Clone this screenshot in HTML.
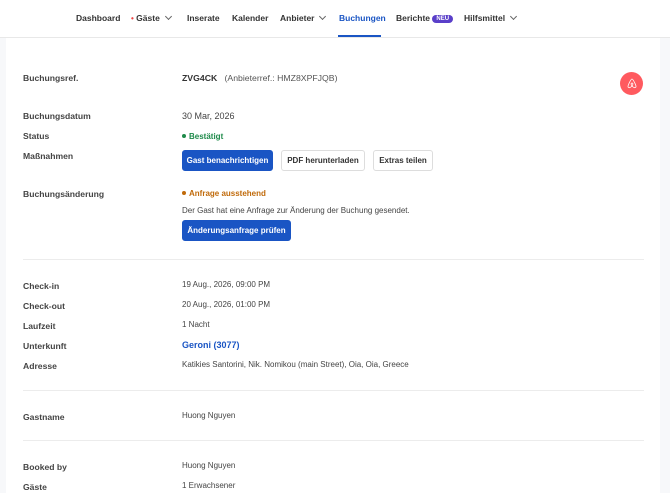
<!DOCTYPE html>
<html><head><meta charset="utf-8"><style>
*{margin:0;padding:0;box-sizing:border-box}
body{width:670px;height:493px;overflow:hidden;background:#f7f8fa;font-family:"Liberation Sans",sans-serif;color:#333;position:relative}
.hdr{position:absolute;left:0;top:0;width:670px;height:38px;background:#fff;border-bottom:1px solid #e8e8e8}
.nav{position:absolute;top:13px;font-size:8.5px;font-weight:bold;color:#333;white-space:nowrap}
.chev{display:inline-block;width:5px;height:5px;border-right:1px solid #666;border-bottom:1px solid #666;transform:rotate(45deg);margin-left:6px;position:relative;top:-2px}
.card{position:absolute;left:6px;top:38px;width:654px;height:455px;background:#fff}
.l{position:absolute;left:23px;font-size:8.6px;font-weight:bold;color:#444}
.v{position:absolute;left:182px;font-size:8px;color:#444;white-space:nowrap}
.hr{position:absolute;left:23px;width:621px;height:1px;background:#ececec}
.btn{position:absolute;height:21px;font-size:8px;font-weight:bold;line-height:19px;text-align:center;border-radius:3px;border:1px solid #ddd;background:#fff;color:#333}
.pri{background:#1a55c4;color:#fff;border-color:#1a55c4}
.dot{display:inline-block;width:4px;height:4px;border-radius:50%;margin-right:3px;position:relative;top:-1px}
</style></head><body>
<div class="hdr"></div>
<div class="nav" style="left:76px">Dashboard</div>
<div class="nav" style="left:131px"><span style="color:#e44;font-size:8px">•</span> Gäste<span class="chev"></span></div>
<div class="nav" style="left:187px">Inserate</div>
<div class="nav" style="left:232px">Kalender</div>
<div class="nav" style="left:280px">Anbieter<span class="chev"></span></div>
<div class="nav" style="left:339px;color:#1a55c4">Buchungen</div>
<div style="position:absolute;left:338px;top:35px;width:43px;height:2px;background:#1a55c4"></div>
<div class="nav" style="left:396px">Berichte <span style="background:#5a3fc9;color:#fff;font-size:6px;padding:1px 4px;border-radius:6px;position:relative;top:-1px">NEU</span></div>
<div class="nav" style="left:464px">Hilfsmittel<span class="chev"></span></div>

<div class="card"></div>
<div class="l" style="top:73px">Buchungsref.</div>
<div class="v" style="top:73px;font-size:8.7px"><b style="color:#333">ZVG4CK</b>&nbsp;&nbsp; <span style="color:#555">(Anbieterref.: HMZ8XPFJQB)</span></div>
<div style="position:absolute;left:620px;top:72px;width:23px;height:23px;border-radius:50%;background:#ff5a5f;color:#fff;font-size:10px;text-align:center;line-height:23px">
<svg width="10" height="11" viewBox="0 0 10 11" style="margin-top:6px"><path d="M5 1 C4 1 1 7 1 8.5 C1 10 3 10.3 5 8 C7 10.3 9 10 9 8.5 C9 7 6 1 5 1 Z M5 8 C3.8 6.5 3.8 5 5 5 C6.2 5 6.2 6.5 5 8Z" fill="none" stroke="#fff" stroke-width="0.8"/></svg></div>
<div class="l" style="top:111px">Buchungsdatum</div>
<div class="v" style="top:111px;font-size:9px">30 Mar, 2026</div>
<div class="l" style="top:131px">Status</div>
<div class="v" style="top:132px;color:#1e8a4a;font-weight:bold"><span class="dot" style="background:#1e8a4a"></span>Bestätigt</div>
<div class="l" style="top:151px">Maßnahmen</div>
<div class="btn pri" style="left:182px;top:150px;width:91px">Gast benachrichtigen</div>
<div class="btn" style="left:281px;top:150px;width:84px">PDF herunterladen</div>
<div class="btn" style="left:373px;top:150px;width:60px">Extras teilen</div>
<div class="l" style="top:189px">Buchungsänderung</div>
<div class="v" style="top:189px;color:#c06a0a;font-weight:bold"><span class="dot" style="background:#c06a0a"></span>Anfrage ausstehend</div>
<div class="v" style="top:206px">Der Gast hat eine Anfrage zur Änderung der Buchung gesendet.</div>
<div class="btn pri" style="left:182px;top:220px;width:109px">Änderungsanfrage prüfen</div>
<div class="hr" style="top:259px"></div>
<div class="l" style="top:281px">Check-in</div><div class="v" style="top:280px">19 Aug., 2026, 09:00 PM</div>
<div class="l" style="top:301px">Check-out</div><div class="v" style="top:300px">20 Aug., 2026, 01:00 PM</div>
<div class="l" style="top:321px">Laufzeit</div><div class="v" style="top:320px">1 Nacht</div>
<div class="l" style="top:341px">Unterkunft</div><div class="v" style="top:340px;color:#1a55c4;font-weight:bold;font-size:9px">Geroni (3077)</div>
<div class="l" style="top:361px">Adresse</div><div class="v" style="top:360px">Katikies Santorini, Nik. Nomikou (main Street), Oia, Oia, Greece</div>
<div class="hr" style="top:390px"></div>
<div class="l" style="top:412px">Gastname</div><div class="v" style="top:411px">Huong Nguyen</div>
<div class="hr" style="top:440px"></div>
<div class="l" style="top:462px">Booked by</div><div class="v" style="top:461px">Huong Nguyen</div>
<div class="l" style="top:482px">Gäste</div><div class="v" style="top:481px">1 Erwachsener</div>
</body></html>
